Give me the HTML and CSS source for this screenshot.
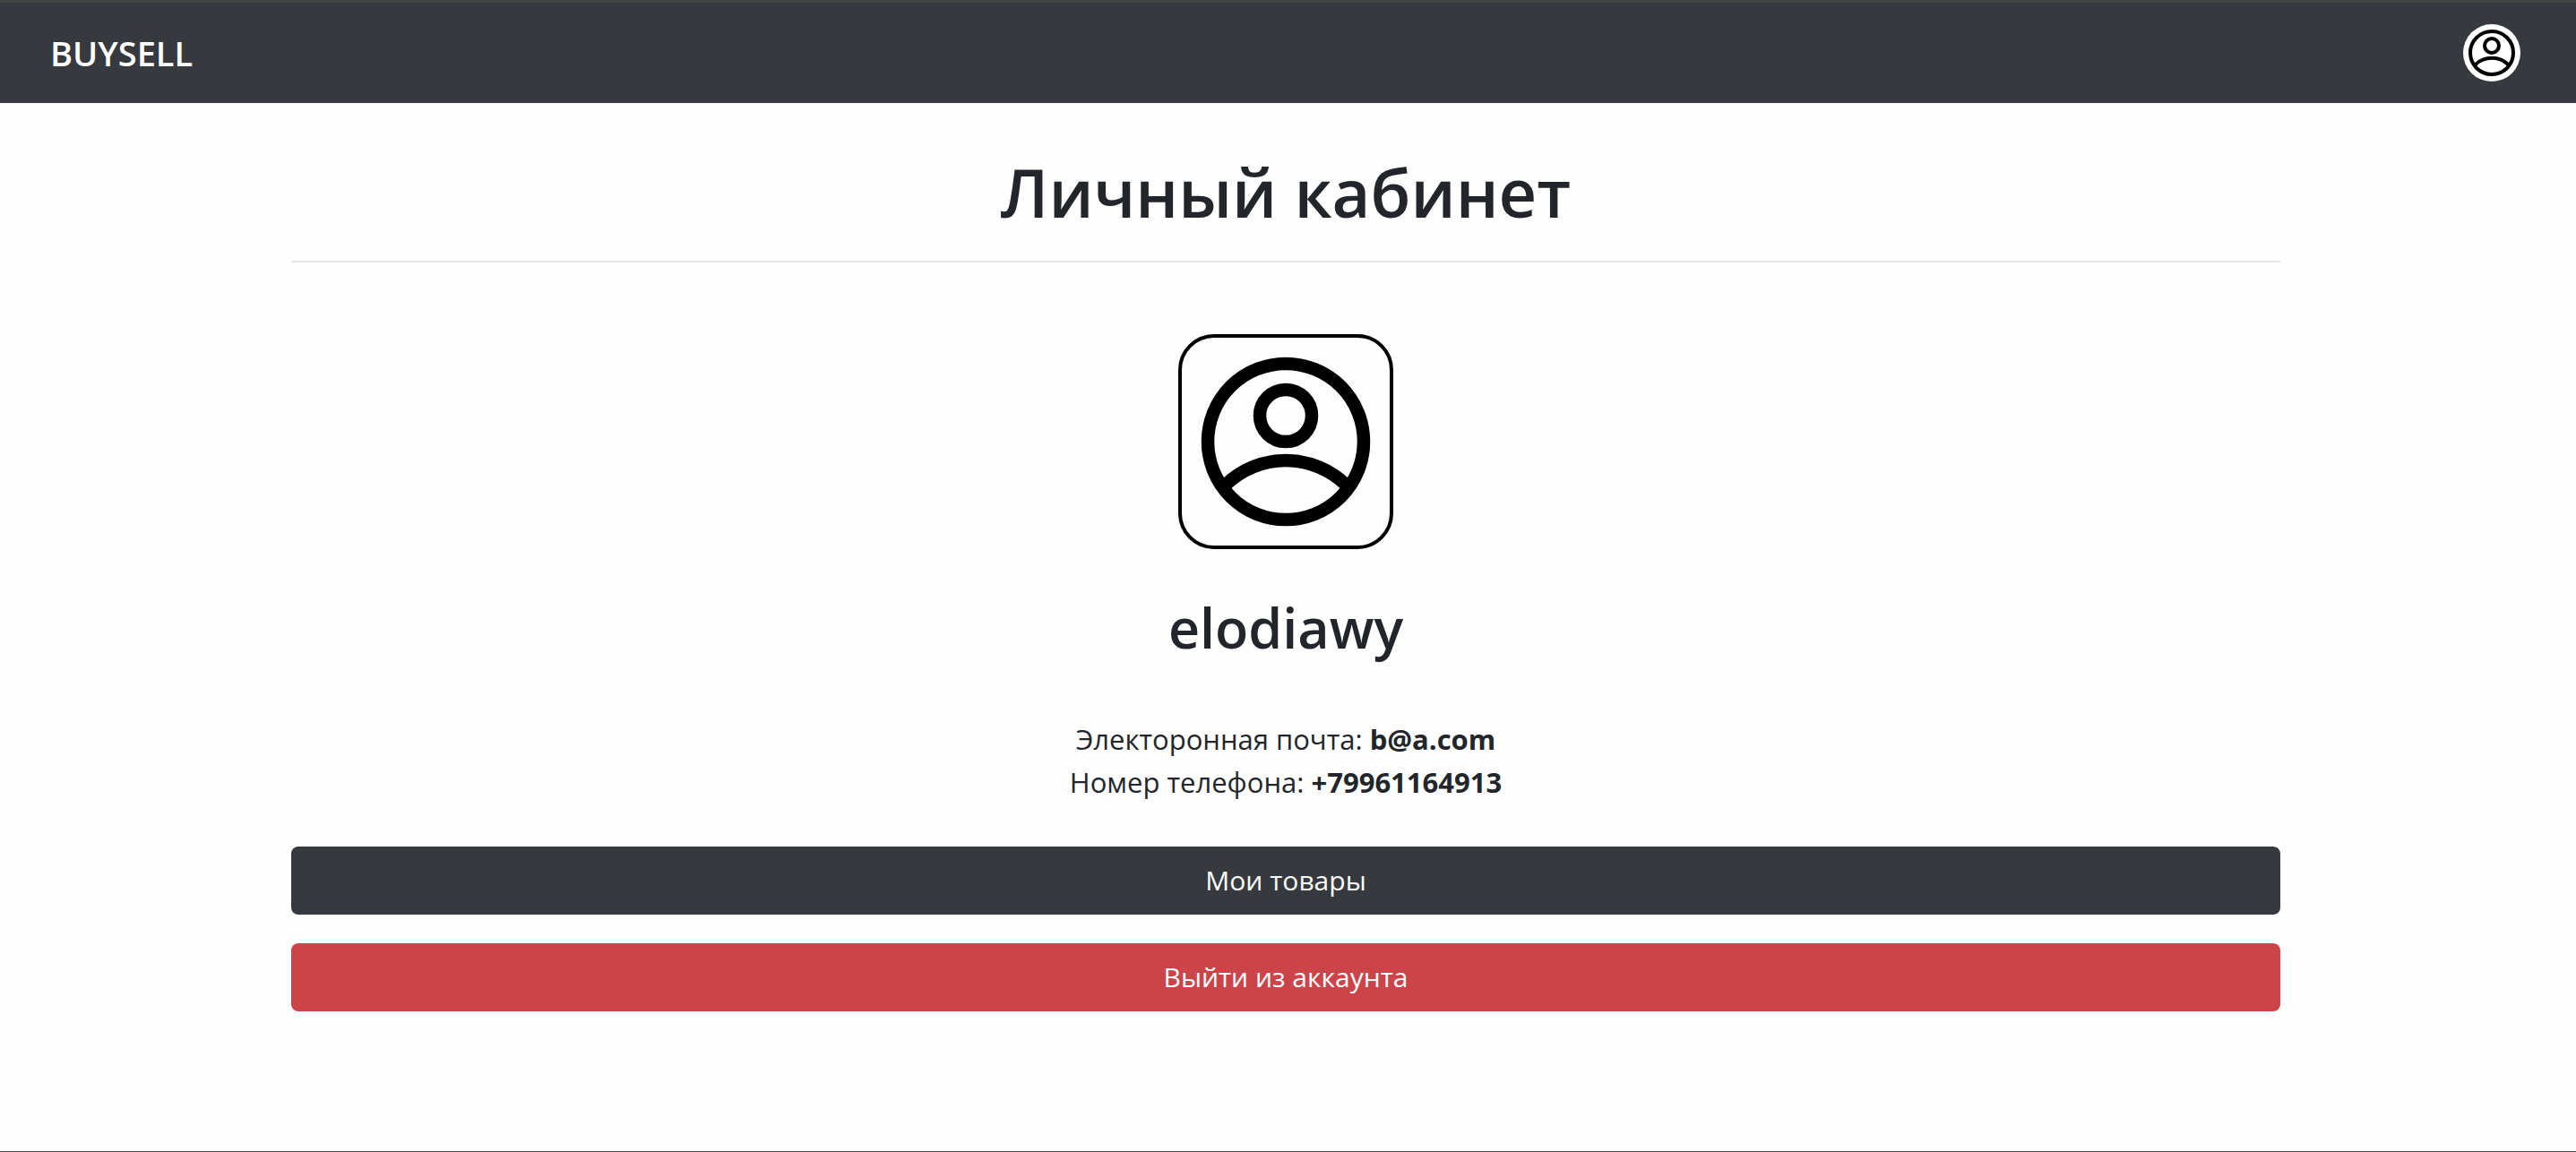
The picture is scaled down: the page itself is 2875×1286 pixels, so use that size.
FILE: index.html
```html
<!DOCTYPE html>
<html lang="ru">
<head>
<meta charset="utf-8">
<title>Личный кабинет</title>
<link rel="stylesheet" href="styles.css">
</head>
<body>
<header class="navbar">
  <a class="brand" href="#">BUYSELL</a>
  <a class="nav-profile" href="#" aria-label="Профиль">
    <svg class="user-icon" viewBox="0 0 16 16" aria-hidden="true">
      <circle cx="8" cy="8" r="6"/>
      <circle cx="8" cy="6" r="2"/>
      <path d="M3.4 11.3A6.65 6.65 0 0 1 12.6 11.3"/>
    </svg>
  </a>
</header>
<main class="container">
  <h1 class="title">Личный кабинет</h1>
  <hr class="divider">
  <div class="avatar">
    <svg class="user-icon" viewBox="0 0 16 16" aria-hidden="true">
      <circle cx="8" cy="8" r="6"/>
      <circle cx="8" cy="6" r="2"/>
      <path d="M3.4 11.3A6.65 6.65 0 0 1 12.6 11.3"/>
    </svg>
  </div>
  <h2 class="username">elodiawy</h2>
  <div class="contacts">
    <div>Электоронная почта: <b>b@a.com</b></div>
    <div>Номер телефона: <b>+79961164913</b></div>
  </div>
  <div class="actions">
    <a class="btn btn-dark" href="#">Мои товары</a>
    <button class="btn btn-danger" type="button">Выйти из аккаунта</button>
  </div>
</main>
</body>
</html>
```
FILE: styles.css
```css
* {
  box-sizing: border-box;
}

body {
  display: flex;
  flex-direction: column;
  min-height: 100vh;
  margin: 0;
  border-top: 3px solid #444444;
  border-bottom: 1px solid #444648;
  background: #fefefe;
  color: #22262a;
  font-family: "Segoe UI", "Open Sans", "Noto Sans", sans-serif;
  font-size: 31px;
  line-height: 48px;
}

.navbar {
  display: flex;
  align-items: center;
  justify-content: space-between;
  padding: 24px 62px 24px 56px;
  background: #363a3e;
}

.brand {
  color: #fff;
  font-size: 38px;
  font-weight: 600;
  text-decoration: none;
}

.nav-profile {
  width: 64px;
  height: 64px;
  border-radius: 50%;
  background: #fff;
}

.user-icon {
  display: block;
  width: 100%;
  height: 100%;
  fill: none;
  stroke: #000;
  stroke-width: 1;
}

.container {
  display: flex;
  flex-direction: column;
  align-items: center;
  width: calc(100% - 64px);
  max-width: 2225px;
  margin: 0 auto;
  padding: 52px 5px 48px 0;
  text-align: center;
}

.title {
  margin: 0;
  font-size: 74px;
  font-weight: 600;
  line-height: 96px;
}

.divider {
  width: 100%;
  height: 2px;
  margin: 28px 0 80px;
  border: 0;
  background: #e4e5e5;
}

.avatar {
  width: 240px;
  height: 240px;
  border: 4px solid #000;
  border-radius: 40px;
}

.username {
  margin: 44px 0 48px;
  font-size: 61px;
  font-weight: 600;
  line-height: 88px;
}

.contacts {
  margin: 8px 0 48px;
}

.actions {
  display: flex;
  flex-direction: column;
  gap: 32px;
  width: 100%;
}

.btn {
  display: block;
  width: 100%;
  padding: 14px 24px;
  border: 0;
  border-radius: 8px;
  color: #fff;
  font: inherit;
  font-size: 30px;
  text-align: center;
  text-decoration: none;
  cursor: pointer;
}

.btn-dark {
  background: #363a3e;
}

.btn-danger {
  background: #cb444a;
}
```
